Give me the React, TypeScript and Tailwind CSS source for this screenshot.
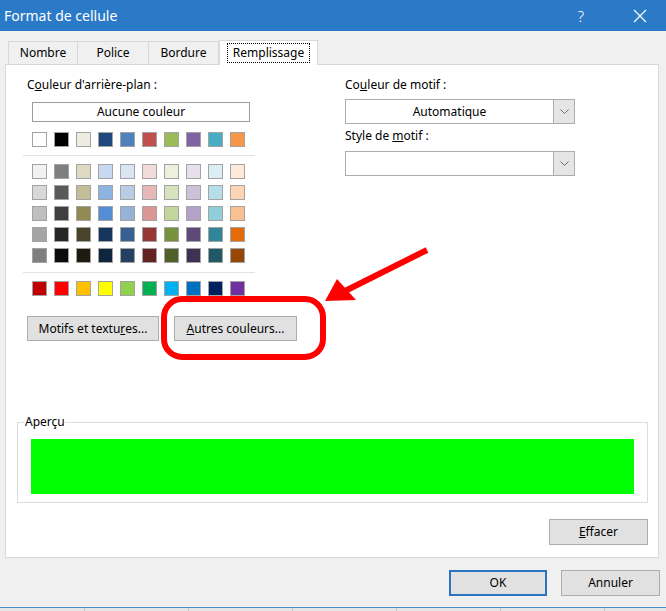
import React from 'react';

const themeRow = [
  'bg-[#FFFFFF]', 'bg-[#000000]', 'bg-[#EEECE1]', 'bg-[#1F497D]', 'bg-[#4F81BD]',
  'bg-[#C0504D]', 'bg-[#9BBB59]', 'bg-[#8064A2]', 'bg-[#4BACC6]', 'bg-[#F79646]',
];

const tintRows = [
  ['bg-[#F2F2F2]', 'bg-[#7F7F7F]', 'bg-[#DDD9C3]', 'bg-[#C6D9F0]', 'bg-[#DBE5F1]', 'bg-[#F2DCDB]', 'bg-[#EBF1DD]', 'bg-[#E5E0EC]', 'bg-[#DBEEF3]', 'bg-[#FDEADA]'],
  ['bg-[#D8D8D8]', 'bg-[#595959]', 'bg-[#C4BD97]', 'bg-[#8DB3E2]', 'bg-[#B8CCE4]', 'bg-[#E5B9B7]', 'bg-[#D7E3BC]', 'bg-[#CCC1D9]', 'bg-[#B7DDE8]', 'bg-[#FBD5B5]'],
  ['bg-[#BFBFBF]', 'bg-[#3F3F3F]', 'bg-[#938953]', 'bg-[#548DD4]', 'bg-[#95B3D7]', 'bg-[#D99694]', 'bg-[#C3D69B]', 'bg-[#B2A2C7]', 'bg-[#92CDDC]', 'bg-[#FAC08F]'],
  ['bg-[#A5A5A5]', 'bg-[#262626]', 'bg-[#494429]', 'bg-[#17365D]', 'bg-[#366092]', 'bg-[#953734]', 'bg-[#76923C]', 'bg-[#5F497A]', 'bg-[#31859B]', 'bg-[#E36C09]'],
  ['bg-[#7F7F7F]', 'bg-[#0C0C0C]', 'bg-[#1D1B10]', 'bg-[#0F243E]', 'bg-[#244061]', 'bg-[#632423]', 'bg-[#4F6128]', 'bg-[#3F3151]', 'bg-[#205867]', 'bg-[#974806]'],
];

const standardRow = [
  'bg-[#C00000]', 'bg-[#FF0000]', 'bg-[#FFC000]', 'bg-[#FFFF00]', 'bg-[#92D050]',
  'bg-[#00B050]', 'bg-[#00B0F0]', 'bg-[#0070C0]', 'bg-[#002060]', 'bg-[#7030A0]',
];

const SwatchRow = ({ colors }: { colors: string[] }) => (
  <div className="flex gap-[7px] ml-[9px]">
    {colors.map((c, i) => (
      <div key={i} className={`w-[15px] h-[15px] border border-[#a3a3a3] ${c}`} />
    ))}
  </div>
);

const Chevron = () => (
  <svg width="9" height="5" viewBox="0 0 9 5" fill="none">
    <path d="M0.5 0.5 L4.5 4.5 L8.5 0.5" stroke="#707070" strokeWidth="1" />
  </svg>
);

const Combo = ({ value }: { value?: string }) => (
  <div className="flex h-[25px] w-[230px] border border-[#acacac] bg-white">
    <div className="flex-1 flex items-center justify-center text-[12px]">{value}</div>
    <div className="w-[21px] flex items-center justify-center bg-[#e5e5e5] border-l border-[#acacac]">
      <Chevron />
    </div>
  </div>
);

const tabs = [
  { label: 'Nombre', w: 'w-[69px]' },
  { label: 'Police', w: 'w-[71px]' },
  { label: 'Bordure', w: 'w-[71px] border-r' },
];

export default function App() {
  return (
    <div className="relative w-[666px] h-[611px] overflow-hidden bg-[#f0f0f0] text-black font-['Noto_Sans',sans-serif] text-[12px] leading-[16px]">
      {/* barre de titre */}
      <div className="flex items-center h-[31px] bg-[#2b7ac8] text-white">
        <span className="pl-[4px] text-[14px] flex-1">Format de cellule</span>
        <span className="w-[20px] text-center text-[15px] font-light mr-[42px]">?</span>
        <svg width="14" height="14" viewBox="0 0 14 14" className="mr-[19px]">
          <path d="M1 1 L13 13 M13 1 L1 13" stroke="white" strokeWidth="1.2" />
        </svg>
      </div>

      {/* onglets */}
      <div className="relative z-10 flex items-end h-[34px] -mb-px pl-[8px]">
        {tabs.map((t) => (
          <div
            key={t.label}
            className={`${t.w} h-[24px] flex items-center justify-center border-t border-l border-b border-[#d9d9d9] bg-[#f0f0f0]`}
          >
            {t.label}
          </div>
        ))}
        <div className="w-[99px] h-[25px] flex items-center justify-center border-t border-l border-r border-[#d9d9d9] bg-white">
          <span className="px-[5px] py-[1px] border border-dotted border-black">Remplissage</span>
        </div>
      </div>

      {/* panneau */}
      <div className="ml-[5px] w-[654px] h-[494px] flex flex-col border border-[#d9d9d9] bg-white">
        <div className="flex">
          {/* couleur d'arrière-plan */}
          <div className="ml-[17px] w-[232px] flex flex-col">
            <div className="mt-[12px] ml-[4px]">
              C<span className="underline">o</span>uleur d'arrière-plan :
            </div>
            <div className="mt-[9px] ml-[9px] w-[218px] h-[20px] flex items-center justify-center border border-[#9c9c9c]">
              Aucune couleur
            </div>
            <div className="mt-[10px]">
              <SwatchRow colors={themeRow} />
            </div>
            <div className="mt-[8px] h-px bg-[#e3e3e3]" />
            <div className="mt-[8px] flex flex-col gap-[6px]">
              {tintRows.map((r, i) => (
                <SwatchRow key={i} colors={r} />
              ))}
            </div>
            <div className="mt-[9px] h-px bg-[#e3e3e3]" />
            <div className="mt-[8px]">
              <SwatchRow colors={standardRow} />
            </div>
          </div>

          {/* motif */}
          <div className="ml-[90px] w-[230px] flex flex-col">
            <div className="mt-[12px]">
              Co<span className="underline">u</span>leur de motif :
            </div>
            <div className="mt-[6px]">
              <Combo value="Automatique" />
            </div>
            <div className="mt-[4px]">
              Style de <span className="underline">m</span>otif :
            </div>
            <div className="mt-[7px]">
              <Combo />
            </div>
          </div>
        </div>

        <div className="flex mt-[20px] ml-[21px] gap-[15px]">
          <div className="w-[132px] h-[25px] flex items-center justify-center bg-[#e1e1e1] border border-[#adadad]">
            Motifs et textu<span className="underline">r</span>es...
          </div>
          <div className="w-[123px] h-[25px] flex items-center justify-center bg-[#e1e1e1] border border-[#adadad]">
            <span className="underline">A</span>utres couleurs...
          </div>
        </div>

        <fieldset className="mt-[73px] ml-[11px] w-[631px] border border-[#dcdcdc] px-[13px] pt-[9px] pb-[8px]">
          <legend className="-ml-[6px] px-0">Aperçu</legend>
          <div className="h-[55px] bg-[#00ff00]" />
        </fieldset>

        <div className="mt-[16px] mr-[10px] self-end w-[99px] h-[26px] flex items-center justify-center bg-[#e1e1e1] border border-[#adadad]">
          <span className="underline">E</span>ffacer
        </div>
      </div>

      {/* boutons du bas */}
      <div className="flex justify-end gap-[14px] mt-[12px] pr-[6px]">
        <div className="w-[98px] h-[26px] flex items-center justify-center bg-[#e1e1e1] border-2 border-[#2a74c0]">
          OK
        </div>
        <div className="w-[99px] h-[26px] flex items-center justify-center bg-[#e1e1e1] border border-[#adadad]">
          Annuler
        </div>
      </div>

      {/* feuille derrière */}
      <div className="mt-[11px] h-px bg-[#4a8fd0]" />
      <div className="flex h-[4px] bg-[#e6e6e6]">
        <div className="w-[84px]" />
        <div className="w-[104px] border-l border-[#c6c6c6]" />
        <div className="w-[104px] border-l border-[#c6c6c6]" />
        <div className="w-[104px] border-l border-[#c6c6c6]" />
        <div className="w-[104px] border-l border-[#c6c6c6]" />
        <div className="w-[104px] border-l border-[#c6c6c6]" />
        <div className="flex-1 border-l border-[#c6c6c6]" />
      </div>

      {/* annotation rouge */}
      <svg className="absolute left-0 top-0 pointer-events-none" width="666" height="611" viewBox="0 0 666 611">
        <rect x="164" y="299" width="159" height="58" rx="18" fill="none" stroke="#ff0000" strokeWidth="6" />
        <path d="M427 250 L343 292" stroke="#ff0000" strokeWidth="6" />
        <path d="M325 301 L337 279 L356 300 Z" fill="#ff0000" />
      </svg>
    </div>
  );
}
